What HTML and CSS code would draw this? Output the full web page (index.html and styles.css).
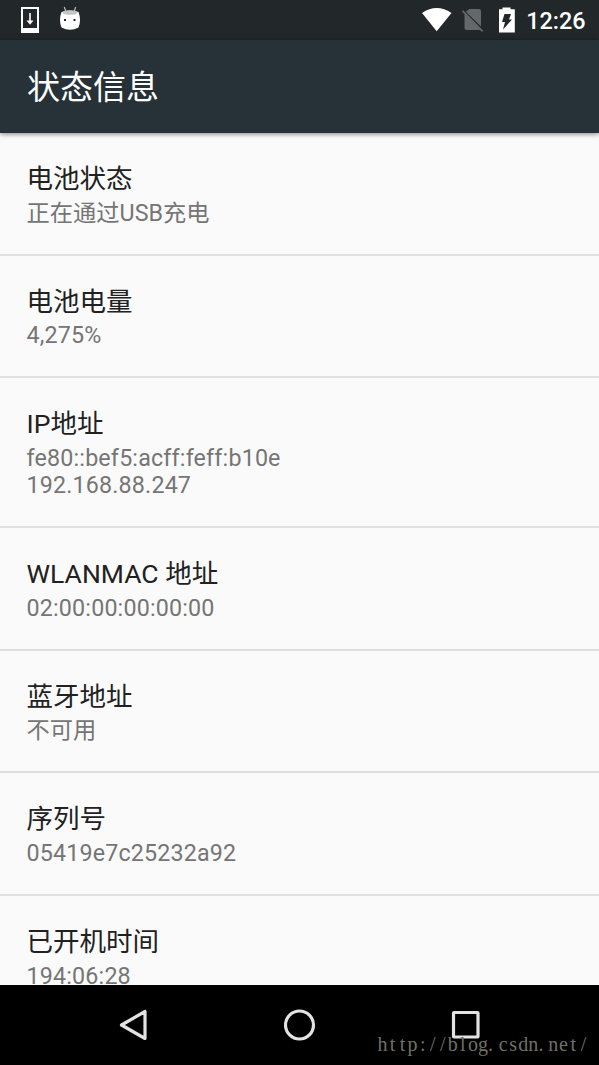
FILE: index.html
```
<!DOCTYPE html>
<html lang="zh-CN">
<head>
<meta charset="utf-8">
<title>状态信息</title>
<link rel="stylesheet" href="styles.css">
</head>
<body>
<div class="screen">
  <header class="status-bar">
    <svg class="status-icons" width="90" height="40" viewBox="0 0 90 40">
      <path d="M21 7h18v26H21zM23 9v19h14V9z" fill="#fff" fill-rule="evenodd"/>
      <path d="M29.2 13h1.6v7.500h2.700L30 24.700 26.500 20.500h2.700z" fill="#fff"/>
      <path d="M64.300 7l1.800 5M75.700 7l-1.800 5" stroke="#bbb" stroke-width="1.200"/>
      <path d="M61.500 12Q70 9 78.500 12Q81.500 20 78.500 27.500Q70 32 61.500 27.500Q58.500 20 61.500 12z" fill="#fff"/>
      <ellipse cx="70" cy="12.500" rx="7.500" ry="2.300" fill="#c4c4c4"/>
      <path d="M64 19h2v2h-2zM73.500 19h2v2h-2z" fill="#22272a"/>
    </svg>
    <div class="status-right">
      <svg width="110" height="40" viewBox="415 0 110 40">
        <path d="M422 13Q436.700 3 451.500 13L436.700 31.300z" fill="#fff"/>
        <path d="M469.500 9h9.500q2 0 2 2v15.500L465.800 11.800zM464.500 13.500L481 30H466.500q-2 0-2-2z" fill="#64686a"/>
        <path d="M462.500 10.800L482.700 31.300" stroke="#64686a" stroke-width="1.800"/>
        <path d="M499 9.200h3.500V7.500h8v1.700h4.300v23.300H499z" fill="#fff"/>
        <path d="M504.500 14h6.500l-2 5.500h3l-9 10 2-7.500h-3z" fill="#22272a"/>
      </svg>
      <span class="clock">12:26</span>
    </div>
  </header>
  <div class="app-bar"><h1 class="app-title">状态信息</h1></div>
  <main class="list">
    <section class="item"><h2 class="item-title">电池状态</h2><p class="item-summary">正在通过USB充电</p></section>
    <section class="item"><h2 class="item-title">电池电量</h2><p class="item-summary numeric">4,275%</p></section>
    <section class="item"><h2 class="item-title">IP地址</h2><p class="item-summary numeric">fe80::bef5:acff:feff:b10e<br>192.168.88.247</p></section>
    <section class="item"><h2 class="item-title">WLANMAC 地址</h2><p class="item-summary numeric">02:00:00:00:00:00</p></section>
    <section class="item"><h2 class="item-title">蓝牙地址</h2><p class="item-summary">不可用</p></section>
    <section class="item"><h2 class="item-title">序列号</h2><p class="item-summary numeric">05419e7c25232a92</p></section>
    <section class="item"><h2 class="item-title">已开机时间</h2><p class="item-summary numeric">194:06:28</p></section>
  </main>
  <nav class="nav-bar">
    <svg width="32" height="32" viewBox="0 0 32 32"><path d="M28 2.500v27L4.500 16z"/></svg>
    <svg width="32" height="32" viewBox="0 0 32 32"><circle cx="15.500" cy="16" r="14"/></svg>
    <svg width="32" height="32" viewBox="0 0 32 32"><rect x="3.500" y="3.500" width="24.500" height="24.500" rx=".5"/></svg>
    <svg class="watermark" width="220" height="30"><text y="22" x="7.500 17.500 27.600 37.600 47.700 57.700 67.800 77.800 87.900 97.900 108 115.500 128.100 138.100 148.200 158.200 166 178.300 188.400 198.400 208.500">http://blog.csdn.net/</text></svg>
  </nav>
</div>
</body>
</html>
```
FILE: styles.css
```
body {
  margin: 0;
  font-family: Roboto, "Noto Sans CJK SC", sans-serif;
}

.screen {
  display: flex;
  flex-direction: column;
  height: 1065px;
  overflow: hidden;
  background: #fafafa;
}

.status-bar {
  display: flex;
  justify-content: space-between;
  flex: 0 0 40px;
  height: 40px;
  background: #22272a;
}

.status-right {
  display: flex;
  padding-right: 13.5px;
}

.status-right svg {
  margin-right: 1px;
}

.clock {
  font-size: 23.4px;
  font-weight: 500;
  line-height: 42px;
  height: 40px;
  color: #fff;
}

.app-bar {
  z-index: 1;
  flex: 0 0 93px;
  background: #273238;
  box-shadow: 0 1px 5px rgba(0, 0, 0, .5);
}

.app-title {
  margin: 0;
  padding-left: 27px;
  font-size: 33px;
  font-weight: 400;
  line-height: 95px;
  height: 93px;
  color: #fff;
}

.list {
  flex: 1;
  min-height: 0;
  overflow: hidden;
}

.item {
  box-sizing: border-box;
  padding: 28.2px 26.6px 26.5px;
  border-bottom: 2px solid #dfdfdf;
}

.item-title {
  margin: 0;
  font-size: 26.5px;
  font-weight: 400;
  line-height: 36px;
  color: #212121;
}

.item-summary {
  margin: 0;
  padding-top: 2.6px;
  font-size: 23.25px;
  line-height: 27.3px;
  color: #757575;
}

.numeric {
  letter-spacing: .17px;
}

.nav-bar {
  position: relative;
  display: flex;
  flex: 0 0 80px;
  gap: 134.5px;
  align-items: center;
  justify-content: center;
  background: #000;
}

.nav-bar svg {
  fill: none;
  stroke: #e3e3e3;
  stroke-width: 3.2;
  stroke-linejoin: round;
}

.nav-bar .watermark {
  position: absolute;
  right: 4px;
  bottom: 6px;
  font-family: "Liberation Serif", serif;
  font-size: 20px;
  text-anchor: middle;
  fill: #707068;
  stroke: none;
}
```
